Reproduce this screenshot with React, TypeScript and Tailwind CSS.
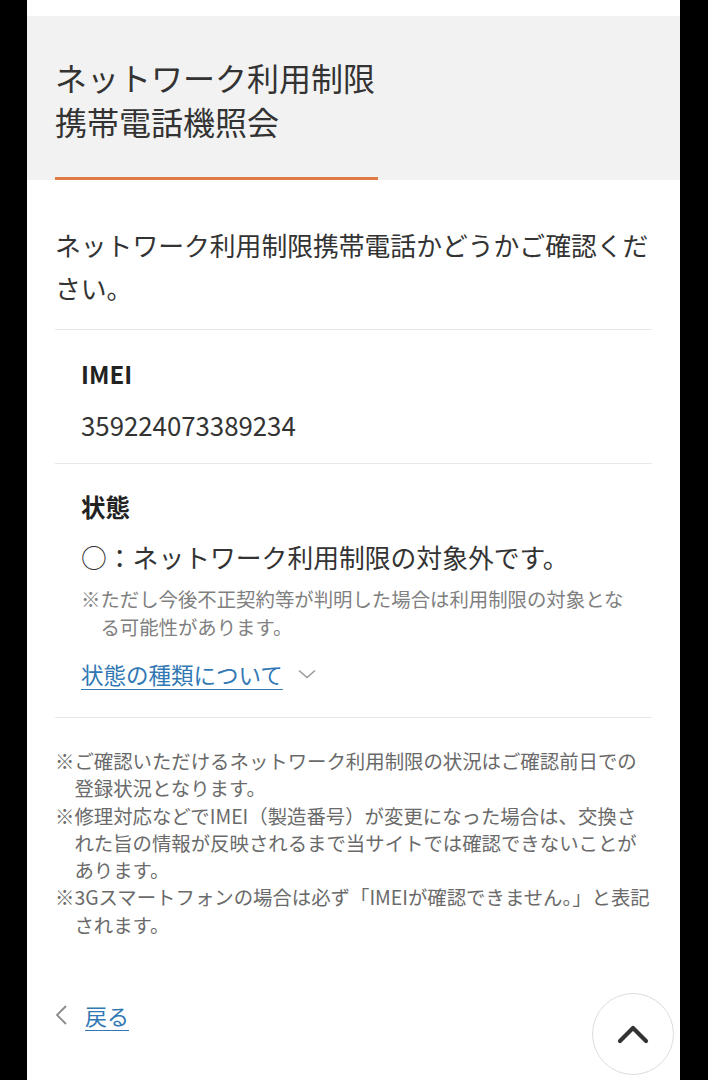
import React from "react";

export default function App() {
  return (
    <div className="relative w-[708px] h-[1080px] overflow-hidden bg-black font-['Noto_Sans_CJK_JP','Noto_Sans',sans-serif]">
      <div className="ml-[27px] w-[653px] h-full bg-white flex flex-col">
        <div className="h-[16px] shrink-0" />
        <header className="shrink-0 bg-[#f2f2f2] h-[164px] px-[28px] pt-[39px] flex flex-col">
          <h1 className="text-[32px] leading-[44px] text-[#333] font-normal whitespace-nowrap">
            ネットワーク利用制限
            <br />
            携帯電話機照会
          </h1>
          <div className="mt-auto w-[323px] h-[3px] bg-[#e07b45]" />
        </header>

        <div className="px-[28px]">
          <p className="pt-[43px] text-[25.8px] leading-[43px] text-[#333] whitespace-nowrap">
            ネットワーク利用制限携帯電話かどうかご確認くだ
            <br />
            さい。
          </p>
          <div className="mt-[20px] h-px bg-[#e8e8e8]" />

          <section className="px-[26px] pt-[26px] pb-[20px]">
            <div className="text-[24px] leading-[36px] font-bold text-[#222]">IMEI</div>
            <div className="mt-[15px] text-[25.8px] leading-[36px] text-[#333]">359224073389234</div>
          </section>
          <div className="h-px bg-[#e8e8e8]" />

          <section className="px-[26px] pt-[25px] pb-[27px]">
            <div className="text-[24.5px] leading-[36px] font-bold text-[#222]">状態</div>
            <div className="mt-[12px] text-[25.8px] leading-[40px] text-[#333] whitespace-nowrap">
              ○：ネットワーク利用制限の対象外です。
            </div>
            <div className="mt-[8px] flex text-[19.4px] leading-[28px] text-[#808080] whitespace-nowrap">
              <span className="w-[1em] shrink-0">※</span>
              <span>
                ただし今後不正契約等が判明した場合は利用制限の対象とな
                <br />
                る可能性があります。
              </span>
            </div>
            <div className="mt-[17px] flex items-center gap-[15px] leading-[32px]">
              <span className="text-[22.5px] text-[#3178b4] underline decoration-1 underline-offset-[5px]">
                状態の種類について
              </span>
              <svg width="18" height="10" viewBox="0 0 18 10" fill="none">
                <path d="M1 1.5 L9 8.5 L17 1.5" stroke="#9a9a9a" strokeWidth="1.6" />
              </svg>
            </div>
          </section>
          <div className="h-px bg-[#e8e8e8]" />

          <div className="pt-[29px] flex flex-col text-[19.4px] leading-[27.3px] text-[#6a6a6a] whitespace-nowrap">
            <div className="flex">
              <span className="w-[1em] shrink-0">※</span>
              <span>
                ご確認いただけるネットワーク利用制限の状況はご確認前日での
                <br />
                登録状況となります。
              </span>
            </div>
            <div className="flex">
              <span className="w-[1em] shrink-0">※</span>
              <span>
                修理対応などでIMEI（製造番号）が変更になった場合は、交換さ
                <br />
                れた旨の情報が反映されるまで当サイトでは確認できないことが
                <br />
                あります。
              </span>
            </div>
            <div className="flex">
              <span className="w-[1em] shrink-0">※</span>
              <span>
                3Gスマートフォンの場合は必ず「IMEIが確認できません。」と表記
                <br />
                されます。
              </span>
            </div>
          </div>

          <div className="mt-[61px] flex items-center gap-[17px] leading-[32px]">
            <svg width="13" height="22" viewBox="0 0 13 22" fill="none">
              <path d="M11 2 L2 11 L11 20" stroke="#8a8a8a" strokeWidth="1.8" />
            </svg>
            <span className="text-[22px] text-[#3178b4] underline decoration-1 underline-offset-[5px]">
              戻る
            </span>
          </div>
        </div>
      </div>

      <div className="absolute left-[592px] top-[993px] w-[82px] h-[82px] rounded-full border border-[#dcdcdc] bg-white flex items-center justify-center">
        <svg width="32" height="20" viewBox="0 0 32 20" fill="none">
          <path d="M3 17 L16 4 L29 17" stroke="#333" strokeWidth="4.2" strokeLinecap="round" strokeLinejoin="round" />
        </svg>
      </div>
    </div>
  );
}
